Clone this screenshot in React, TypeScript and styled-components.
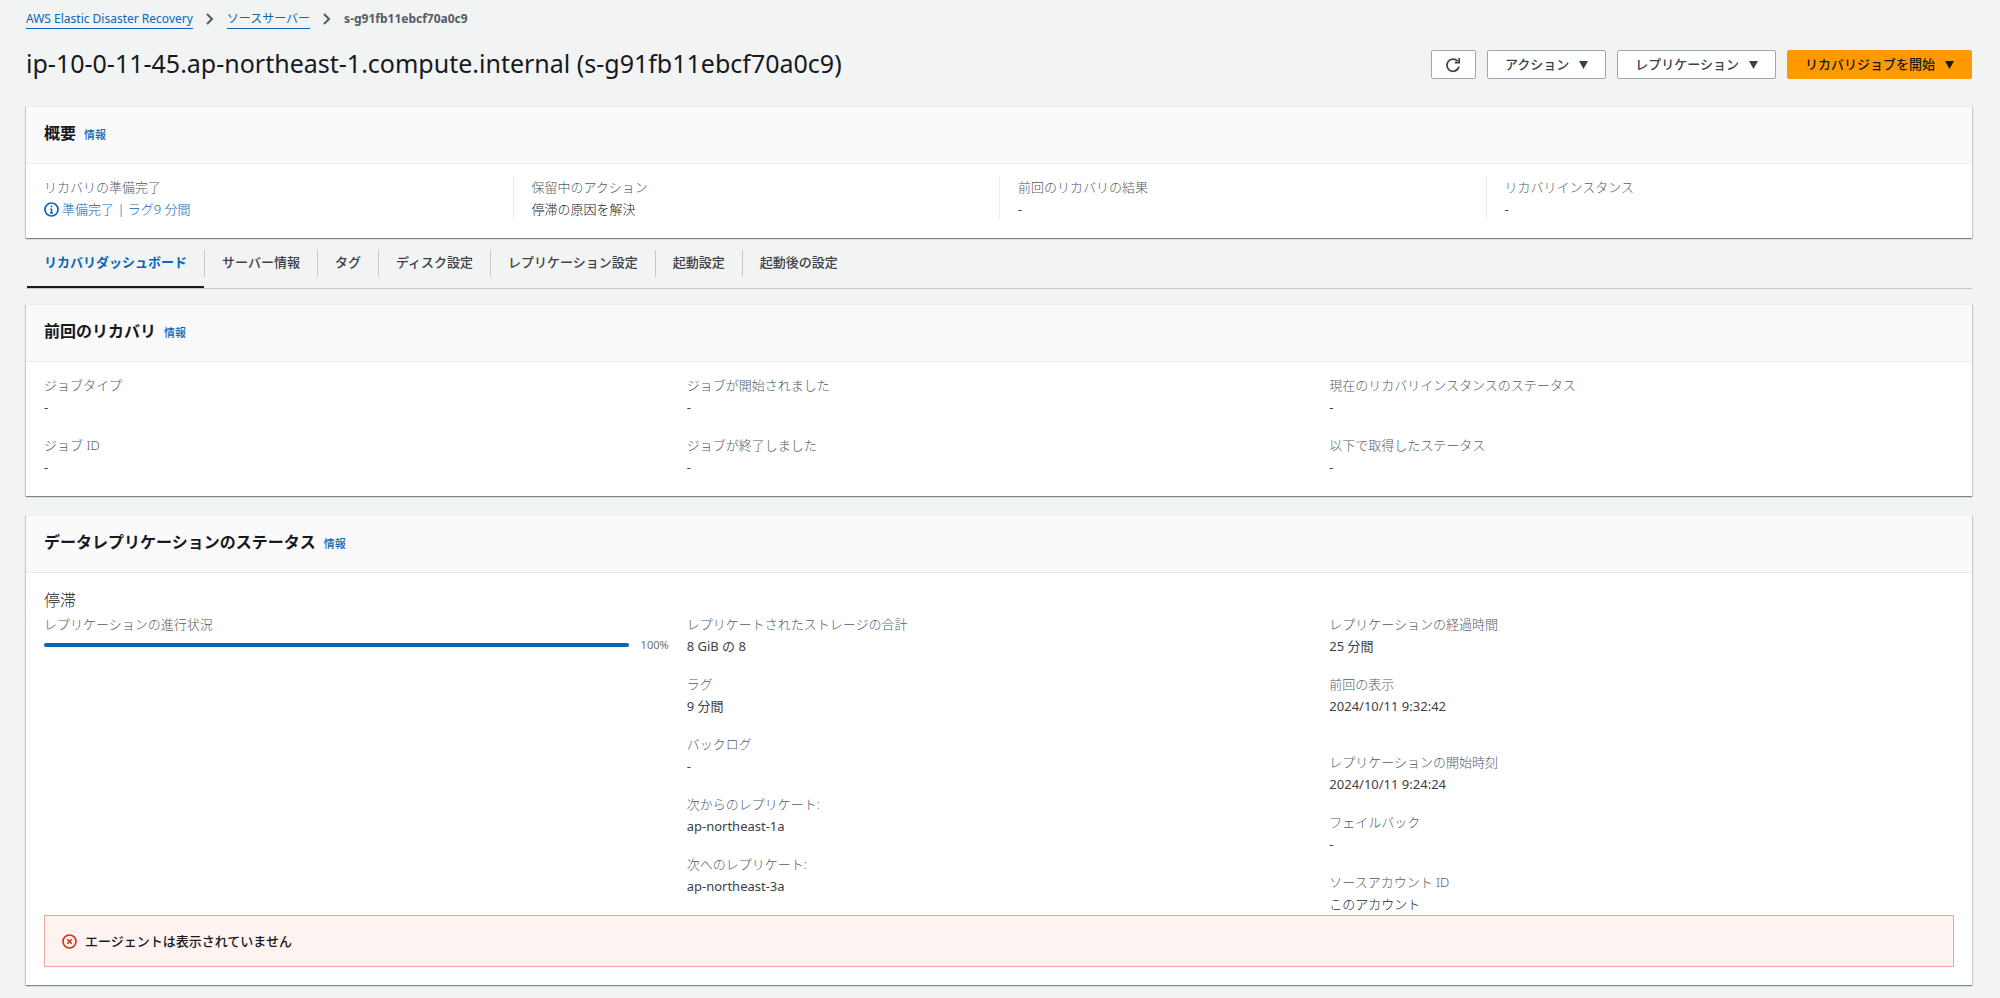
import React from 'react';
import styled, { createGlobalStyle, css } from 'styled-components';

const color = {
  page: '#f2f3f3',
  panel: '#ffffff',
  header: '#fafafa',
  line: '#eaeded',
  link: '#0a66b7',
  text: '#16191f',
  body: '#3c4148',
  label: '#545b64',
  primary: '#ff9900',
  error: '#d13212',
};

const GlobalStyle = createGlobalStyle`
  *, *::before, *::after { box-sizing: border-box; }
  body {
    margin: 0;
    background: ${color.page};
    color: ${color.text};
    font: 400 13px/22px "Noto Sans", "Noto Sans CJK JP", sans-serif;
  }
  h1, h2, p, dl, dd, ul, ol { margin: 0; padding: 0; }
  ul, ol { list-style: none; }
  button { font: inherit; cursor: pointer; }
`;

const Page = styled.main`
  padding: 8px 28px 12px 26px;
`;

const BreadcrumbList = styled.ol`
  display: flex;
  align-items: center;
  gap: 13px;
  height: 22px;
`;

const Crumb = styled.li`
  display: flex;
  align-items: center;
  gap: 13px;
  font-size: 12px;
  font-weight: 700;
  color: ${color.label};
`;

const CrumbLink = styled.a`
  line-height: 18px;
  font-weight: 400;
  color: ${color.link};
  text-decoration: none;
  border-bottom: 1px solid ${color.link};
`;

const TitleRow = styled.header`
  display: flex;
  align-items: flex-start;
  justify-content: space-between;
  margin: 17px 0 27px;
`;

const Title = styled.h1`
  font-size: 25px;
  line-height: 32px;
  font-weight: 400;
`;

const Actions = styled.div`
  display: flex;
  gap: 11px;
  padding-top: 3px;
`;

const Button = styled.button<{ $primary?: boolean }>`
  display: flex;
  align-items: center;
  gap: 10px;
  height: 29px;
  padding: 0 17px 1px;
  border: 1px solid ${p => (p.$primary ? color.primary : '#a0a7ab')};
  border-radius: 2px;
  background: ${p => (p.$primary ? color.primary : color.panel)};
  color: ${p => (p.$primary ? color.text : color.body)};
  font-weight: 500;
`;

const IconButton = styled(Button)`
  justify-content: center;
  width: 45px;
  padding: 0;
`;

const Panel = styled.section`
  background: ${color.panel};
  border-top: 1px solid ${color.line};
  box-shadow: 0 1px 1px 0 rgba(0, 28, 36, 0.3), 1px 1px 1px 0 rgba(0, 28, 36, 0.15),
    -1px 1px 1px 0 rgba(0, 28, 36, 0.15);

  & + & { margin-top: 19px; }
`;

const PanelHeader = styled.header`
  display: flex;
  align-items: baseline;
  gap: 8px;
  padding: 13px 18px 17px;
  background: ${color.header};
  border-bottom: 1px solid ${color.line};
`;

const PanelTitle = styled.h2`
  font-size: 16px;
  line-height: 26px;
  font-weight: 700;
`;

const InfoLink = styled.a`
  font-size: 11px;
  font-weight: 500;
  color: ${color.link};
  text-decoration: none;
`;

const SummaryList = styled.dl`
  display: grid;
  grid-template-columns: repeat(4, 1fr);
  padding: 12px 0 18px;
`;

const SummaryItem = styled.div`
  padding: 0 18px;
  & + & { border-left: 1px solid ${color.line}; }
`;

const Label = styled.dt`
  color: ${color.label};
  font-weight: 300;
`;

const Value = styled.dd<{ $light?: boolean }>`
  color: ${p => (p.$light ? color.text : color.body)};
  font-weight: ${p => (p.$light ? 300 : 400)};
`;

const StatusLink = styled.a`
  display: flex;
  align-items: center;
  gap: 3px;
  font-weight: 300;
  color: ${color.link};
  text-decoration: none;
`;

const Columns = styled.div`
  display: grid;
  grid-template-columns: repeat(3, 1fr);
  column-gap: 18px;
`;

const Fields = styled.dl`
  display: flex;
  flex-direction: column;
  gap: 16px;
`;

const Field = styled.div<{ $spaced?: boolean }>`
  ${p => p.$spaced && css`margin-top: 18px;`}
`;

const PanelBody = styled.div`
  padding: 12px 18px 18px;
`;

const Tabs = styled.ul`
  display: flex;
  padding-top: 12px;
  margin-bottom: 15px;
  border-bottom: 1px solid #c3cacc;
`;

const TabItem = styled.li`
  display: flex;
  align-items: flex-start;
  &:first-child { padding-left: 1px; }
  &:not(:last-child)::after {
    content: '';
    width: 1px;
    height: 27px;
    background: #c3cacc;
  }
`;

const Tab = styled.button<{ $active?: boolean }>`
  height: 38px;
  padding: 0 17px 13px;
  border: 0;
  border-bottom: 2px solid ${p => (p.$active ? color.text : 'transparent')};
  background: none;
  color: ${p => (p.$active ? color.link : color.body)};
  font-weight: ${p => (p.$active ? 700 : 500)};
`;

const State = styled.p`
  padding-top: 3px;
  font-size: 16px;
  line-height: 25px;
  font-weight: 300;
  color: ${color.text};
`;

const ProgressRow = styled.dd`
  display: flex;
  align-items: center;
  gap: 12px;
  height: 20px;
  font-size: 11px;
  color: #6a7177;
`;

const Track = styled.div`
  flex: 1;
  height: 4px;
  border-radius: 2px;
  background: ${color.line};
`;

const Bar = styled.div`
  height: 100%;
  border-radius: inherit;
  background: ${color.link};
`;

const Alert = styled.div`
  display: flex;
  align-items: center;
  gap: 8px;
  height: 52px;
  padding: 0 17px;
  border: 1px solid #eba99d;
  background: #fdf3f1;
  font-weight: 500;
`;

const Chevron = () => (
  <svg width="8" height="12" viewBox="0 0 8 12" fill="none" stroke={color.label} strokeWidth="2" aria-hidden="true">
    <path d="M1 1l5 5-5 5" />
  </svg>
);

const Caret = () => (
  <svg width="9" height="10" viewBox="0 0 9 10" fill="currentColor" aria-hidden="true">
    <path d="M0 2h9L4.500 10z" />
  </svg>
);

const RefreshIcon = () => (
  <svg width="16" height="16" viewBox="0 0 16 16" fill="none" stroke="currentColor" strokeWidth="1.700" aria-hidden="true">
    <path d="M14 9.500a6.100 6.100 0 1 1-1.300-5.300" />
    <path d="M14.200 1v4.600H9.800" />
  </svg>
);

const InfoIcon = () => (
  <svg width="15" height="15" viewBox="0 0 15 15" fill="none" stroke={color.link} strokeWidth="1.700" aria-hidden="true">
    <circle cx="7.500" cy="7.500" r="6.500" />
    <path d="M7.500 3.600v1.700M6.300 7.200h1.200v3.800M6 11h3" strokeWidth="1.500" />
  </svg>
);

const ErrorIcon = () => (
  <svg width="15" height="15" viewBox="0 0 15 15" fill="none" stroke={color.error} strokeWidth="1.600" aria-hidden="true">
    <circle cx="7.500" cy="7.500" r="6.500" />
    <path d="M5.300 5.300l4.400 4.400M9.700 5.300L5.300 9.700" />
  </svg>
);

const tabs = ['リカバリダッシュボード', 'サーバー情報', 'タグ', 'ディスク設定', 'レプリケーション設定', '起動設定', '起動後の設定'];

type Entry = { label: string; value: string; spaced?: boolean; light?: boolean };

const summary: Entry[] = [
  { label: '保留中のアクション', value: '停滞の原因を解決', light: true },
  { label: '前回のリカバリの結果', value: '-' },
  { label: 'リカバリインスタンス', value: '-' },
];

const recovery: Entry[][] = [
  [{ label: 'ジョブタイプ', value: '-' }, { label: 'ジョブ ID', value: '-' }],
  [{ label: 'ジョブが開始されました', value: '-' }, { label: 'ジョブが終了しました', value: '-' }],
  [{ label: '現在のリカバリインスタンスのステータス', value: '-' }, { label: '以下で取得したステータス', value: '-' }],
];

const replication: Entry[][] = [
  [
    { label: 'レプリケートされたストレージの合計', value: '8 GiB の 8' },
    { label: 'ラグ', value: '9 分間' },
    { label: 'バックログ', value: '-' },
    { label: '次からのレプリケート:', value: 'ap-northeast-1a' },
    { label: '次へのレプリケート:', value: 'ap-northeast-3a' },
  ],
  [
    { label: 'レプリケーションの経過時間', value: '25 分間' },
    { label: '前回の表示', value: '2024/10/11 9:32:42' },
    { label: 'レプリケーションの開始時刻', value: '2024/10/11 9:24:24', spaced: true },
    { label: 'フェイルバック', value: '-' },
    { label: 'ソースアカウント ID', value: 'このアカウント', light: true },
  ],
];

const FieldColumn = ({ entries }: { entries: Entry[] }) => (
  <Fields>
    {entries.map(e => (
      <Field key={e.label} $spaced={e.spaced}>
        <Label>{e.label}</Label>
        <Value $light={e.light}>{e.value}</Value>
      </Field>
    ))}
  </Fields>
);

const Heading = ({ children }: { children: React.ReactNode }) => (
  <PanelHeader>
    <PanelTitle>{children}</PanelTitle>
    <InfoLink href="#info">情報</InfoLink>
  </PanelHeader>
);

export default function App() {
  const progress = 100;
  return (
    <Page>
      <GlobalStyle />
      <nav aria-label="パンくずリスト">
        <BreadcrumbList>
          <Crumb><CrumbLink href="#drs">AWS Elastic Disaster Recovery</CrumbLink><Chevron /></Crumb>
          <Crumb><CrumbLink href="#servers">ソースサーバー</CrumbLink><Chevron /></Crumb>
          <Crumb aria-current="page">s-g91fb11ebcf70a0c9</Crumb>
        </BreadcrumbList>
      </nav>
      <TitleRow>
        <Title>ip-10-0-11-45.ap-northeast-1.compute.internal (s-g91fb11ebcf70a0c9)</Title>
        <Actions>
          <IconButton type="button" aria-label="更新"><RefreshIcon /></IconButton>
          <Button type="button">アクション<Caret /></Button>
          <Button type="button">レプリケーション<Caret /></Button>
          <Button type="button" $primary>リカバリジョブを開始<Caret /></Button>
        </Actions>
      </TitleRow>

      <Panel>
        <Heading>概要</Heading>
        <SummaryList>
          <SummaryItem>
            <Label>リカバリの準備完了</Label>
            <Value><StatusLink href="#lag"><InfoIcon />準備完了 | ラグ9 分間</StatusLink></Value>
          </SummaryItem>
          {summary.map(e => (
            <SummaryItem key={e.label}>
              <Label>{e.label}</Label>
              <Value $light={e.light}>{e.value}</Value>
            </SummaryItem>
          ))}
        </SummaryList>
      </Panel>

      <Tabs role="tablist">
        {tabs.map((t, i) => (
          <TabItem key={t} role="presentation">
            <Tab type="button" role="tab" aria-selected={i === 0} $active={i === 0}>{t}</Tab>
          </TabItem>
        ))}
      </Tabs>

      <Panel>
        <Heading>前回のリカバリ</Heading>
        <PanelBody>
          <Columns>
            {recovery.map(c => <FieldColumn key={c[0].label} entries={c} />)}
          </Columns>
        </PanelBody>
      </Panel>

      <Panel>
        <Heading>データレプリケーションのステータス</Heading>
        <PanelBody>
          <State>停滞</State>
          <Columns>
            <Fields>
              <Field>
                <Label id="progress-label">レプリケーションの進行状況</Label>
                <ProgressRow>
                  <Track role="progressbar" aria-labelledby="progress-label" aria-valuenow={progress}>
                    <Bar style={{ width: `${progress}%` }} />
                  </Track>
                  {progress}%
                </ProgressRow>
              </Field>
            </Fields>
            {replication.map(c => <FieldColumn key={c[0].label} entries={c} />)}
          </Columns>
          <Alert role="alert"><ErrorIcon />エージェントは表示されていません</Alert>
        </PanelBody>
      </Panel>
    </Page>
  );
}
